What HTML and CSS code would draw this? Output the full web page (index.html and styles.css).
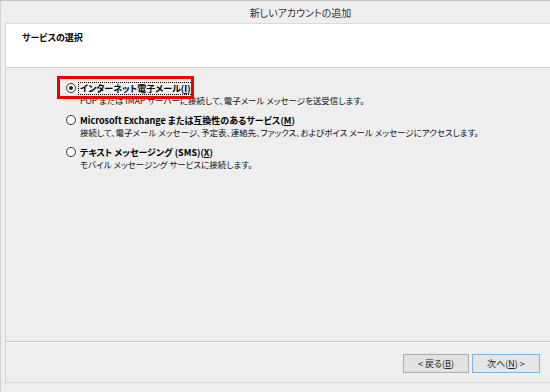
FILE: index.html
```html
<!DOCTYPE html>
<html lang="ja">
<head>
    <meta charset="UTF-8">
    <title>新しいアカウントの追加</title>
    <link rel="stylesheet" href="styles.css">
</head>
<body>
    <div class="window">
        <div class="titlebar">新しいアカウントの追加</div>
        <div class="client">
            <div class="header">
                <h1>サービスの選択</h1>
            </div>
            <div class="content">
                <div class="options">
                    <div class="option">
                        <label class="choice">
                            <span class="radio checked"></span>
                            <span class="label focus">インターネット電子メール(<u>I</u>)</span>
                        </label>
                        <p class="desc">POP または IMAP サーバーに接続して、電子メール メッセージを送受信します。</p>
                    </div>
                    <div class="option">
                        <label class="choice">
                            <span class="radio"></span>
                            <span class="label">Microsoft Exchange または互換性のあるサービス(<u>M</u>)</span>
                        </label>
                        <p class="desc">接続して、電子メール メッセージ、予定表、連絡先、ファックス、およびボイス メール メッセージにアクセスします。</p>
                    </div>
                    <div class="option">
                        <label class="choice">
                            <span class="radio"></span>
                            <span class="label">テキスト メッセージング (SMS)(<u>X</u>)</span>
                        </label>
                        <p class="desc">モバイル メッセージング サービスに接続します。</p>
                    </div>
                </div>
                <div class="annot"></div>
            </div>
            <div class="footer">
                <button class="btn">&lt; 戻る(<u>B</u>)</button>
                <button class="btn default">次へ(<u>N</u>) &gt;</button>
            </div>
        </div>
    </div>
</body>
</html>
```

FILE: styles.css
```css
html, body {
    margin: 0;
    height: 100%;
}
body {
    font-family: "Noto Sans CJK JP", "Noto Sans", sans-serif;
    background: #eeeeee;
    color: #000;
    overflow: hidden;
}
.window {
    border-top: 1px solid #c4c4c4;
    border-left: 1px solid #d2d2d2;
    height: 100%;
    box-sizing: border-box;
}
.titlebar {
    height: 22px;
    line-height: 24px;
    padding-left: 50px;
    text-align: center;
    font-size: 10px;
    color: #333;
    font-feature-settings: "palt";
}
.client {
    margin-left: 4px;
    border-left: 1px solid #d6d6d6;
}
.header {
    background: #fff;
    border-top: 1px solid #dadada;
    border-bottom: 1px solid #cfcfcf;
    height: 45px;
    box-sizing: border-box;
    padding: 8px 16px 0;
}
.header h1 {
    margin: 0;
    font-size: 9px;
    line-height: 12px;
    font-weight: bold;
    font-feature-settings: "palt";
}
.content {
    position: relative;
    height: 273px;
    padding: 14px 0 0 60px;
    box-sizing: border-box;
}
.option {
    margin-bottom: 8px;
}
.choice {
    display: flex;
    align-items: center;
    height: 12px;
}
.radio {
    width: 8px;
    height: 8px;
    border: 1px solid #333;
    border-radius: 50%;
    background: #fff;
    display: flex;
    align-items: center;
    justify-content: center;
    margin-right: 3px;
}
.radio.checked::after {
    content: "";
    width: 4px;
    height: 4px;
    border-radius: 50%;
    background: #222;
}
.label {
    font-size: 9px;
    line-height: 11px;
    font-weight: bold;
    font-feature-settings: "palt";
    padding: 0 1px;
}
.label.focus {
    outline: 1px dotted #000;
}
.desc {
    margin: 0 0 0 14px;
    font-size: 8.5px;
    line-height: 12px;
    font-feature-settings: "palt";
    color: #111;
}
.annot {
    position: absolute;
    left: 51px;
    top: 8px;
    width: 131px;
    height: 17px;
    border: 3px solid #ee0000;
}
.footer {
    border-top: 1px solid #c2c2c2;
    box-shadow: inset 0 1px 0 #fff;
    border-bottom: 1px solid #d4d4d4;
    height: 42px;
    box-sizing: border-box;
    padding: 12px 10px 0 0;
    display: flex;
    justify-content: flex-end;
    align-items: flex-start;
    gap: 3px;
}
.btn {
    height: 19px;
    width: 66px;
    padding: 0;
    font-family: inherit;
    font-size: 9px;
    color: #222;
    background: #e1e1e1;
    border: 1px solid #adadad;
    font-feature-settings: "palt";
}
.btn.default {
    width: 68px;
    background: #e5e5e5;
    border-color: #7eb4ea;
}
```
